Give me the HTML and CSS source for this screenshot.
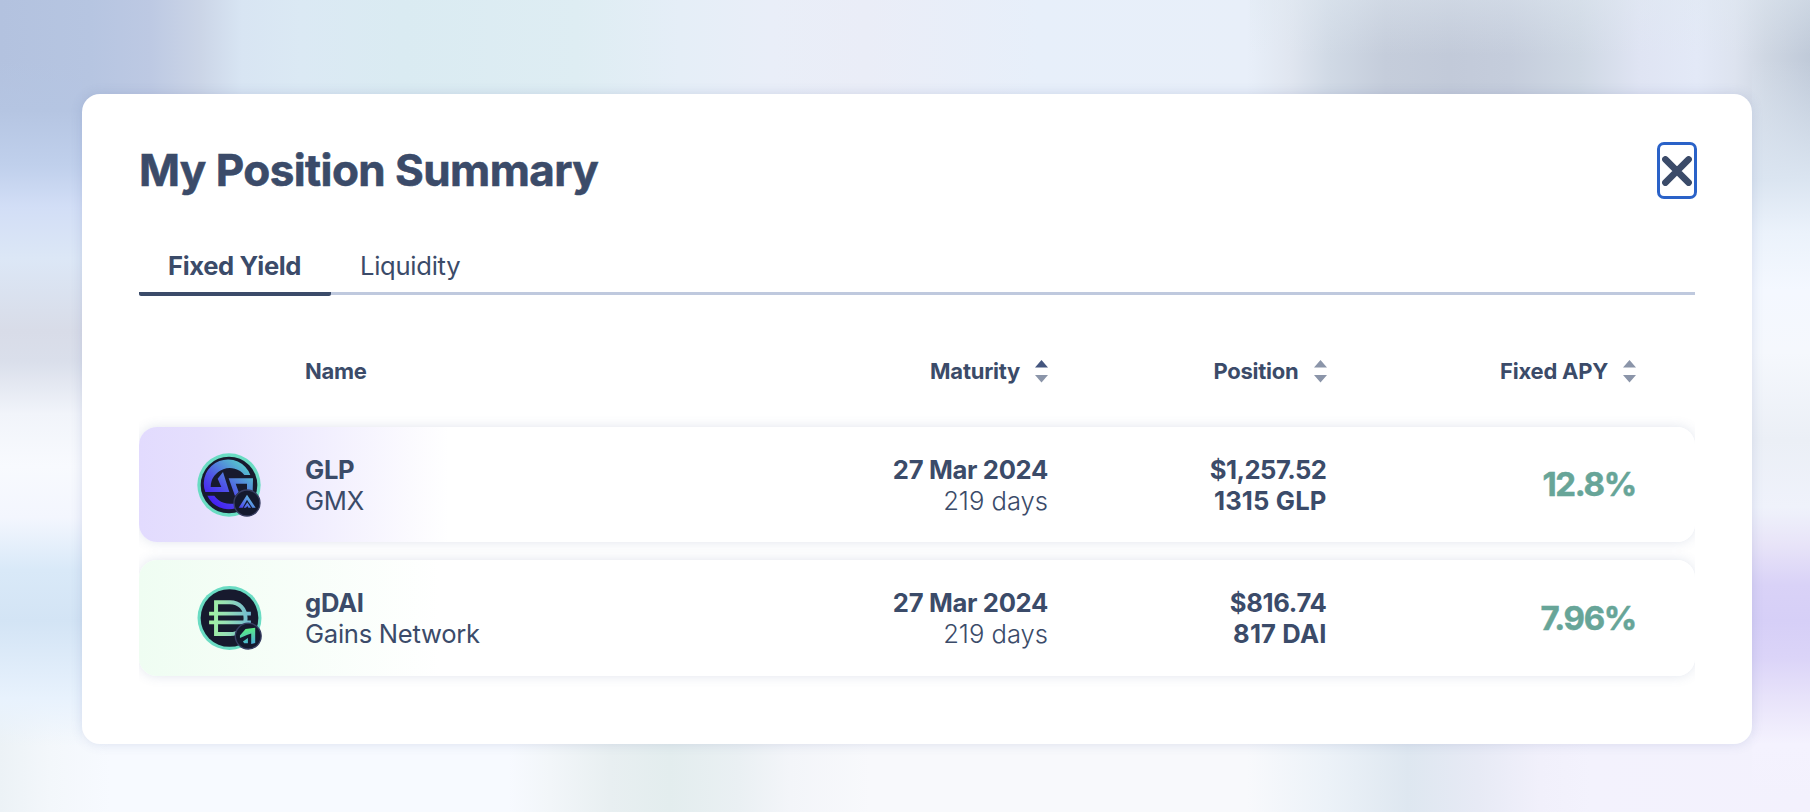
FILE: index.html
```html
<!DOCTYPE html>
<html lang="en">
<head>
<meta charset="utf-8">
<title>My Position Summary</title>
<link rel="stylesheet" href="styles.css">
</head>
<body>
<main class="dialog">
  <header class="dialog-header">
    <h1 class="title">My Position Summary</h1>
    <button class="close" aria-label="Close">
      <svg width="30" height="30" viewBox="0 0 30 30"><path d="M3.4 3.4 26.6 26.6M26.6 3.4 3.4 26.6" stroke="#3b4b69" stroke-width="6.6" stroke-linecap="round"/></svg>
    </button>
  </header>
  <nav class="tabs">
    <a class="tab active">Fixed Yield</a>
    <a class="tab">Liquidity</a>
  </nav>
  <section class="table">
    <div class="grid head">
      <span></span>
      <span>Name</span>
      <span class="sort">Maturity <svg width="13" height="23" viewBox="0 0 13 23"><path d="M6.5 0 13 7.5H0Z" fill="#44567f"/><path d="M0 15H13L6.5 22.5Z" fill="#8b95a9"/></svg></span>
      <span class="sort">Position <svg width="13" height="23" viewBox="0 0 13 23"><path d="M6.5 0 13 7.5H0ZM0 15H13L6.5 22.5Z" fill="#8b95a9"/></svg></span>
      <span class="sort">Fixed APY <svg width="13" height="23" viewBox="0 0 13 23"><path d="M6.5 0 13 7.5H0ZM0 15H13L6.5 22.5Z" fill="#8b95a9"/></svg></span>
    </div>
    <div class="grid row glp">
      <svg class="token" viewBox="36 37 192 192">
        <defs>
          <linearGradient id="gmx" gradientUnits="userSpaceOnUse" x1="80" y1="195" x2="180" y2="75"><stop offset="0" stop-color="#4318f5"/><stop offset=".45" stop-color="#4f55e6"/><stop offset="1" stop-color="#56c6cc"/></linearGradient>
          <linearGradient id="arb" gradientUnits="userSpaceOnUse" x1="166" y1="204" x2="200" y2="166"><stop offset="0" stop-color="#4b3cf0"/><stop offset="1" stop-color="#62c6dc"/></linearGradient>
        </defs>
        <circle cx="132" cy="133" r="95" fill="#6adcc3"/>
        <circle cx="132" cy="133" r="85" fill="#171a2e"/>
        <path fill="url(#gmx)" d="M196 103A72 72 0 0 0 61 154H133L114 94L98 114L109 139H77A57 57 0 0 1 178 103ZM131 113H204L203 154H186V129H152L161 154L150 166ZM67 165H88A58 58 0 0 0 152 187V203A72 72 0 0 1 67 165Z"/>
        <circle cx="186" cy="187" r="39" fill="#14192e" stroke="#373d61" stroke-width="4"/>
        <path fill="url(#arb)" d="M186 162 212 201H202L186 177 173 201H161ZM187 185 198 201H190L187 196 183 201H176Z"/>
      </svg>
      <div class="name"><b>GLP</b><br>GMX</div>
      <div class="num"><b>27 Mar 2024</b><br><span class="light">219 days</span></div>
      <div class="num"><b class="long">$1,257.52</b><br><b class="units">1315 GLP</b></div>
      <div class="apy">12.8%</div>
    </div>
    <div class="grid row gdai">
      <svg class="token wide" viewBox="36 41 195 193">
        <defs>
          <linearGradient id="dai" gradientUnits="userSpaceOnUse" x1="72" y1="130" x2="198" y2="130"><stop offset="0" stop-color="#a2f3a0"/><stop offset=".4" stop-color="#98e0b5"/><stop offset="1" stop-color="#6fb7d2"/></linearGradient>
          <linearGradient id="gns" gradientUnits="userSpaceOnUse" x1="190" y1="165" x2="200" y2="216"><stop offset="0" stop-color="#5cf27c"/><stop offset="1" stop-color="#4aaed8"/></linearGradient>
        </defs>
        <circle cx="133.5" cy="137.5" r="96.5" fill="#6adcc3"/>
        <circle cx="133.5" cy="137.5" r="87" fill="#171a2e"/>
        <path fill="none" stroke="url(#dai)" stroke-width="12" d="M93 90H135C163 90 182 110 182 138S163 186 135 186H93Z"/>
        <path fill="url(#dai)" d="M72 119H198V130H72ZM72 145H198V156H72Z"/>
        <circle cx="190" cy="192" r="39" fill="#14192e" stroke="#373d61" stroke-width="4"/>
        <path fill="url(#gns)" d="M165 190 182 171 211 167V213L199 216V184L188 188 165 198ZM174 208 189 198V214H178Z"/>
      </svg>
      <div class="name"><b>gDAI</b><br>Gains Network</div>
      <div class="num"><b>27 Mar 2024</b><br><span class="light">219 days</span></div>
      <div class="num"><b>$816.74</b><br><b class="units">817 DAI</b></div>
      <div class="apy">7.96%</div>
    </div>
  </section>
</main>
</body>
</html>
```
FILE: styles.css
```css
* { box-sizing: border-box; }

body {
  margin: 0;
  height: 812px;
  padding: 94px 58px 68px 82px;
  overflow: hidden;
  font-family: Inter, "Liberation Sans", sans-serif;
  color: #3b4b69;
  background:
    linear-gradient(rgba(181, 197, 226, 0) 0, rgba(181, 197, 226, 0) 60px, #b5c5e2 110px, #c0d0ec 166px, #d2def6 207px, #dce7f6 259px, #d8dce8 331px, #dadfeb 362px, #f1f4fa 414px, #f8fafe 466px, #f3f6fe 518px, #d9e9f8 570px, #d3e4f5 621px, #e8f2fd 699px, rgba(236, 244, 253, 0) 746px) 0 0 / 82px 812px no-repeat,
    linear-gradient(rgba(213, 222, 234, 0) 0, rgba(213, 222, 234, 0) 60px, #dbe5f1 181px, #ebf2fb 233px, #f4f8ff 290px, #f5f8fd 352px, #ebeff6 440px, #eff2fb 507px, #e8e4f8 544px, #d9d2f7 585px, #d6cff7 621px, #dbd4f8 658px, #e8e3fa 699px, #f4f2fe 744px, rgba(244, 242, 254, 0) 800px) 100% 0 / 58px 812px no-repeat,
    linear-gradient(rgba(225, 234, 242, .4), rgba(225, 234, 242, 0)) 100% 0 / 560px 55px no-repeat,
    linear-gradient(90deg, #b3c2df 0, #b6c5e1 90px, #bdc9e3 150px, #cbd5e7 200px, #d8e5f3 242px, #dbe9f4 300px, #daebf2 404px, #deedf3 577px, #e5eef7 680px, #e9eef8 770px, #eaedf7 866px, #e7effa 1039px, #e8eff9 1247px, #e0e6f0 1290px, #d0d9e5 1330px, #c5cddb 1385px, #c2cad9 1450px, #c5cddc 1510px, #cfd8e4 1581px, #dfe4f3 1639px, #e3e9f7 1697px, #dde3ef 1735px, #cfd7e3 1765px, #c0cad9 1810px) 0 0 / 1810px 400px no-repeat,
    linear-gradient(90deg, #ecf2f6 0, #f3f7fb 50px, #f7faff 110px, #f7faff 508px, #f2f6f9 550px, #e8eff1 610px, #e3edee 670px, #eaf0f3 739px, #f3f5f9 790px, #f8f9fc 870px, #f8f9fc 1247px, #ecf2f8 1327px, #dee7f0 1408px, #e7eaf5 1478px, #f1f0fb 1540px, #f3f2fd 1590px, #f3f1fd 1810px);
}

.dialog {
  height: 650px;
  padding: 48px 57px 0;
  border-radius: 18px;
  background: #fff;
  box-shadow: 0 0 12px rgba(80, 100, 160, .17);
}

.dialog-header {
  display: flex;
  justify-content: space-between;
  height: 57px;
}

.title {
  margin: 0;
  font-size: 44px;
  line-height: 56px;
  font-weight: 700;
  letter-spacing: -.57px;
  -webkit-text-stroke: .6px;
}

.close {
  display: flex;
  align-items: center;
  justify-content: center;
  width: 40px;
  height: 57px;
  margin-right: -2px;
  padding: 0;
  border: 3px solid #2a62c8;
  border-radius: 7px;
  background: #fff;
}

.tabs {
  display: flex;
  height: 97px;
  align-items: flex-end;
  background: linear-gradient(#bfc9de, #bfc9de) 0 93px / 100% 3px no-repeat;
}

.tab {
  height: 50px;
  padding: 0 29px;
  font-size: 25.6px;
  line-height: 39px;
  letter-spacing: -.28px;
}

.active {
  width: 192px;
  font-weight: 650;
  letter-spacing: -.37px;
  white-space: nowrap;
  background: linear-gradient(#3b4b69, #3b4b69) 0 46px / 100% 4px no-repeat;
  border-radius: 2px;
}

.table { overflow: hidden; }

.grid {
  display: grid;
  grid-template-columns: 108px 1fr 270px 278.5px 309.5px;
  align-items: center;
  padding: 0 59px 0 58px;
}

.head {
  height: 131px;
  padding-top: 19px;
  font-size: 22px;
  font-weight: 700;
  letter-spacing: -.25px;
}

.sort {
  display: flex;
  align-items: center;
  justify-content: flex-end;
  gap: 15px;
}

.row {
  height: 115px;
  margin-bottom: 18px;
  border-radius: 18px;
  font-size: 25.6px;
  line-height: 31px;
  letter-spacing: -.28px;
  box-shadow: 0 0 12px rgba(80, 100, 150, .17);
}

.glp { background: linear-gradient(90deg, #e2dbfe 0, #e5dffd 60px, #fff 310px); }
.gdai {
  height: 116px;
  background: linear-gradient(90deg, #effdf2 0, #fff 300px);
}

.token { width: 64px; height: 64px; }
.wide { width: 65px; }

b { font-weight: 650; }
.name b { font-weight: 700; }
.num { letter-spacing: -.32px; }
.num .long { letter-spacing: -.5px; }
.num .units { letter-spacing: .15px; }
.light { font-weight: 300; letter-spacing: 0; }
.num, .apy { text-align: right; }

.apy {
  font-size: 33px;
  font-weight: 700;
  letter-spacing: -1.3px;
  color: #67a598;
  -webkit-text-stroke: .5px;
}
```
